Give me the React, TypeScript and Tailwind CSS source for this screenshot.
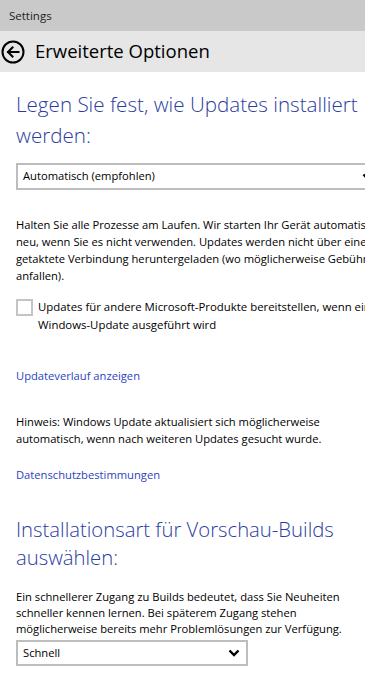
import React from 'react';

const FONT = { fontFamily: '"Segoe UI", "Open Sans", "Noto Sans", sans-serif' };

function BackIcon() {
  return (
    <svg width="24" height="24" viewBox="0 0 24 24" fill="none" stroke="#000" strokeWidth="2">
      <circle cx="12" cy="12" r="10.5" />
      <path d="M17.5 12H7M11.5 7.5L7 12l4.5 4.5" strokeLinecap="square" />
    </svg>
  );
}

function Chevron() {
  return (
    <svg width="12" height="8" viewBox="0 0 12 8" fill="none" stroke="#000" strokeWidth="2.4">
      <path d="M1.5 1.5L6 6l4.5-4.5" />
    </svg>
  );
}

function Lines({ lines, className }: { lines: string[]; className: string }) {
  return (
    <div className={className}>
      {lines.map((l) => (
        <div key={l} className="whitespace-nowrap">
          {l}
        </div>
      ))}
    </div>
  );
}

export default function App() {
  return (
    <div className="w-[365px] h-[693px] overflow-hidden bg-white text-black" style={FONT}>
      <div className="h-[31px] bg-[#c9c9c9] flex items-center px-[9px] text-[11.5px] text-[#222]">Settings</div>
      <div className="h-[41px] bg-[#e6e6e6] flex items-center gap-[10px] pl-[1px]">
        <BackIcon />
        <span className="text-[18.5px] leading-none">Erweiterte Optionen</span>
      </div>

      <div className="pl-[16px]">
        <Lines
          className="mt-[17px] text-[20.6px] font-light leading-[31px] text-[#2b3c9e]"
          lines={['Legen Sie fest, wie Updates installiert', 'werden:']}
        />

        <div className="mt-[12px] w-[364px] h-[27px] border-2 border-[#bdbdbd] flex items-center justify-between pl-[5px] pr-[4px] text-[11.2px]">
          <span>Automatisch (empfohlen)</span>
          <Chevron />
        </div>

        <Lines
          className="mt-[26px] text-[11.2px] leading-[17px]"
          lines={[
            'Halten Sie alle Prozesse am Laufen. Wir starten Ihr Gerät automatisch',
            'neu, wenn Sie es nicht verwenden. Updates werden nicht über einen',
            'getaktete Verbindung heruntergeladen (wo möglicherweise Gebühren',
            'anfallen).',
          ]}
        />

        <div className="mt-[14px] flex items-start gap-[5px]">
          <div className="mt-[1px] w-[17px] h-[17px] border-2 border-[#c4c4c4] shrink-0" />
          <Lines
            className="text-[11.4px] leading-[18px]"
            lines={['Updates für andere Microsoft-Produkte bereitstellen, wenn ein', 'Windows-Update ausgeführt wird']}
          />
        </div>

        <div className="mt-[33px] text-[11.2px] leading-[17px] text-[#2b44c0]">Updateverlauf anzeigen</div>

        <Lines
          className="mt-[29px] text-[11.2px] leading-[17px]"
          lines={['Hinweis: Windows Update aktualisiert sich möglicherweise', 'automatisch, wenn nach weiteren Updates gesucht wurde.']}
        />

        <div className="mt-[19px] text-[11.2px] leading-[17px] text-[#2b44c0]">Datenschutzbestimmungen</div>

        <Lines
          className="mt-[32px] text-[20.3px] font-light leading-[28px] text-[#2b3c9e]"
          lines={['Installationsart für Vorschau-Builds', 'auswählen:']}
        />

        <Lines
          className="mt-[18px] text-[11.2px] leading-[16px]"
          lines={[
            'Ein schnellerer Zugang zu Builds bedeutet, dass Sie Neuheiten',
            'schneller kennen lernen. Bei späterem Zugang stehen',
            'möglicherweise bereits mehr Problemlösungen zur Verfügung.',
          ]}
        />

        <div className="mt-[3px] w-[232px] h-[26px] border-2 border-[#bdbdbd] flex items-center justify-between pl-[5px] pr-[6px] text-[11.2px]">
          <span>Schnell</span>
          <Chevron />
        </div>
      </div>
    </div>
  );
}
